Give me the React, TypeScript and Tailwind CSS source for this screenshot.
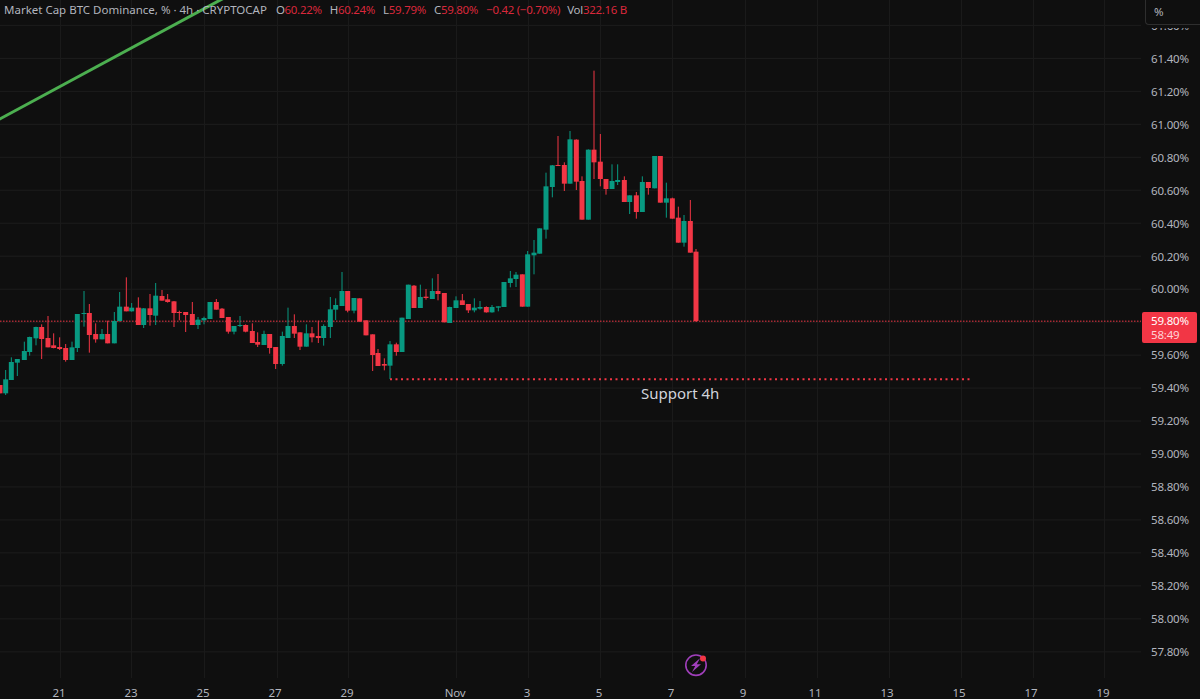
import React from "react";

type C = [number, number, number, number, number, "r" | "g"];

// [zoom x, wick top, wick bottom, body top, body bottom, colour], in 3x crop coordinates
const a: C[] = [
  [0,345,370,345,370,"r"],[17,300,375,328,370,"g"],[34,262,330,276,330,"g"],[52,267,318,267,278,"g"],[73,215,270,243,270,"g"],
  [89,200,257,201,246,"g"],[108,170,226,171,205,"g"],[125,163,267,171,207,"r"],[144,138,232,204,232,"r"],[161,190,235,226,234,"r"],
  [179,202,240,231,237,"r"],[197,222,275,234,270,"r"],[216,215,270,232,270,"g"],[232,132,246,132,234,"g"],[252,63,170,129,132,"g"],
  [268,102,248,129,195,"r"],[287,160,218,192,208,"r"],[306,177,208,192,208,"g"],[323,152,220,192,220,"r"],[343,126,220,153,220,"g"],
  [359,66,155,110,153,"g"],[379,22,124,110,124,"r"],[395,99,125,113,124,"g"],[415,82,165,113,165,"r"],[431,114,174,115,165,"g"],
  [450,72,167,115,135,"r"],[467,39,165,77,137,"g"],[486,60,92,78,92,"r"],[503,72,98,88,96,"r"],[522,93,171,94,129,"r"],
  [538,122,151,126,129,"r"],[557,126,186,126,135,"r"],[577,96,165,132,165,"r"],[594,141,177,149,165,"g"],[612,140,163,144,151,"g"],
  [630,96,147,96,147,"g"],[649,87,119,96,119,"r"],[666,114,144,116,144,"r"],[685,141,191,141,185,"r"],[702,168,193,168,185,"g"],
  [720,138,171,165,168,"g"],[737,163,187,165,185,"r"],[757,160,219,183,219,"r"],[773,187,231,216,224,"r"],
];
const b: C[] = [
  [12,197,240,207,240,"g"],[29,207,266,207,249,"r"],[47,246,312,246,297,"r"],[67,200,302,213,297,"g"],[84,128,219,183,219,"g"],
  [103,148,219,183,206,"r"],[120,202,255,202,245,"r"],[139,178,245,205,245,"g"],[156,186,232,205,217,"r"],[175,167,234,213,219,"r"],
  [191,178,242,183,219,"g"],[211,96,219,133,186,"g"],[227,100,165,120,134,"g"],[246,21,123,78,123,"g"],[263,78,142,78,137,"r"],
  [282,99,145,99,137,"g"],[299,100,170,100,170,"r"],[318,166,211,166,211,"r"],[338,208,318,208,270,"r"],[354,252,303,264,303,"r"],
  [373,280,316,297,302,"r"],[390,228,342,238,302,"g"],[409,233,272,238,261,"r"],[426,158,261,158,261,"g"],[445,59,162,59,162,"g"],
  [462,60,129,62,129,"r"],[481,59,129,96,129,"g"],[498,72,104,95,99,"r"],[517,40,102,78,102,"g"],[534,27,106,78,87,"r"],
  [553,84,172,84,172,"r"],[569,125,174,126,174,"g"],[588,94,129,106,129,"g"],[607,87,120,106,120,"r"],[625,117,144,117,136,"r"],
  [643,100,142,128,136,"g"],[660,108,134,126,131,"g"],[679,124,143,126,142,"r"],[696,120,143,126,142,"g"],[715,124,139,124,128,"g"],
  [732,51,126,51,126,"g"],[751,18,67,40,54,"g"],[768,21,66,29,42,"g"],
];
const c: C[] = [
  [37,628,725,628,725,"r"],[53,558,725,568,725,"g"],[72,525,628,563,571,"g"],[89,490,566,490,566,"g"],[108,323,521,364,494,"g"],
  [127,300,397,301,366,"g"],[144,213,303,300,303,"r"],[163,292,378,300,356,"r"],[180,198,356,223,356,"g"],[199,223,375,224,350,"r"],
  [216,334,464,348,464,"r"],[235,253,464,254,464,"g"],[252,17,342,254,292,"r"],[271,207,364,290,342,"r"],[288,342,389,342,372,"r"],
  [306,298,372,348,372,"g"],[323,298,360,345,351,"g"],[343,334,411,345,411,"r"],[359,391,447,391,411,"g"],[379,381,461,391,441,"r"],
  [397,334,441,351,441,"g"],[415,351,389,351,369,"r"],[434,273,370,273,370,"g"],[451,273,413,273,413,"r"],[469,353,458,400,413,"g"],
  [487,398,461,400,461,"r"],[505,425,533,458,533,"r"],[522,450,545,468,533,"g"],[541,405,563,468,563,"r"],[558,552,771,560,768,"r"],
];

const shift = (list: C[], ox: number, oy: number): C[] =>
  list.map(([x, t, w, bt, bb, k]) => [ox + x / 3, oy + t / 3, oy + w / 3, oy + bt / 3, oy + bb / 3, k] as C);
const candles: C[] = [...shift(a, 0, 270), ...shift(b, 260, 265), ...shift(c, 510, 65)];

const RED = "#f23645";
const GREEN = "#089981";
const hLines = Array.from({ length: 20 }, (_, i) => 25.4 + i * 32.97);
const vLines = [60, 131, 204, 277, 348, 456, 528, 600, 672, 745, 817, 889, 961, 1033, 1104];
const prices = ["61.60","61.40","61.20","61.00","60.80","60.60","60.40","60.20","60.00","","59.60","59.40","59.20","59.00","58.80","58.60","58.40","58.20","58.00","57.80"];
const days = ["21","23","25","27","29"];
const laterDays = ["3","5","7","9","11","13","15","17","19"];
const ohlc = [["O","60.22%"],["H","60.24%"],["L","59.79%"],["C","59.80%"]];

export default function App() {
  return (
    <div className="relative flex h-[699px] w-[1200px] flex-col overflow-hidden bg-[#0f0f0f] font-['Noto_Sans','Liberation_Sans',sans-serif] text-[#b2b5be]">
      <div className="flex h-[678px]">
        <div className="relative w-[1141px]">
          <svg width="1141" height="678" className="block">
            {hLines.map((y) => <line key={y} x1="0" x2="1141" y1={y} y2={y} stroke="#1d1d1d" strokeWidth="1" />)}
            {vLines.map((x) => <line key={x} x1={x + 0.5} x2={x + 0.5} y1="0" y2="678" stroke="#1a1a1a" strokeWidth="1" />)}
            <line x1="-2" y1="120" x2="224" y2="-2" stroke="#4caf50" strokeWidth="3" />
            <line x1="0" x2="1141" y1="321.3" y2="321.3" stroke={RED} strokeOpacity="0.65" strokeWidth="1.4" strokeDasharray="1.5 1.5" />
            {candles.map(([x, t, w, bt, bb, k], i) => {
              const col = k === "r" ? RED : GREEN;
              return (
                <g key={i}>
                  <line x1={x} x2={x} y1={t} y2={w} stroke={col} strokeWidth="1" />
                  <rect x={x - 2.5} y={bt} width="5" height={Math.max(bb - bt, 1)} fill={col} />
                </g>
              );
            })}
            <line x1="390" x2="971" y1="379.2" y2="379.2" stroke={RED} strokeWidth="2" strokeDasharray="2 3.5" />
            <circle cx="696" cy="665.2" r="10.2" fill="none" stroke="#a03fbb" strokeWidth="1.6" />
            <path d="M700 658.2 L691 666 L695.2 666 L692 672 L701 664.2 L696.8 664.2 Z" fill="#a03fbb" />
            <circle cx="703" cy="658.5" r="3" fill={RED} />
          </svg>
          <div className="absolute left-[4px] top-[2px] flex h-[16px] items-center whitespace-nowrap text-[11.5px] leading-none">
            <span>Market Cap BTC Dominance, % · 4h · CRYPTOCAP</span>
            <div className="ml-[9px] flex gap-[8px] tracking-[-0.3px]">
              {ohlc.map(([l, v]) => (
                <span key={l}>{l}<span className="text-[#d9283b]">{v}</span></span>
              ))}
            </div>
            <span className="ml-[8px] tracking-[-0.3px] text-[#d9283b]">−0.42 (−0.70%)</span>
            <span className="ml-[7px] tracking-[-0.3px]">Vol<span className="text-[#d9283b]">322.16 B</span></span>
          </div>
          <div className="absolute left-[641px] top-[383px] text-[15px] leading-[20px] text-[#d1d4dc]">Support 4h</div>
        </div>
        <div className="flex w-[59px] flex-col pl-[10px] pt-[9px] tracking-[-0.2px]">
          {prices.map((p, i) => (
            <div key={i} className="flex h-[32.97px] items-center text-[11.5px] leading-none">{p ? p + "%" : ""}</div>
          ))}
        </div>
      </div>
      <div className="flex h-[21px] items-start pl-[23px] pt-[7px] text-[11.5px] leading-[16px] tracking-[-0.2px]">
        {days.map((d) => <div key={d} className="w-[72px] text-center">{d}</div>)}
        <div className="ml-[36px] w-[72px] text-center">Nov</div>
        {laterDays.map((d) => <div key={d} className="w-[72px] text-center">{d}</div>)}
      </div>
      <div className="absolute right-0 top-0 flex h-[25px] w-[55px] items-center rounded-bl-[4px] border-b border-l border-[#2e2e2e] bg-[#0f0f0f] pl-[8px] text-[11.5px] shadow-[0_3px_0_#0f0f0f]">%</div>
      <div className="absolute left-[1142px] top-[312px] flex h-[31px] w-[55px] flex-col justify-center rounded-[2px] bg-[#f23645] pl-[9px] text-[11.5px] leading-[14px] tracking-[-0.2px] text-white">
        <span>59.80%</span>
        <span className="text-[#ffd3d7]">58:49</span>
      </div>
    </div>
  );
}
